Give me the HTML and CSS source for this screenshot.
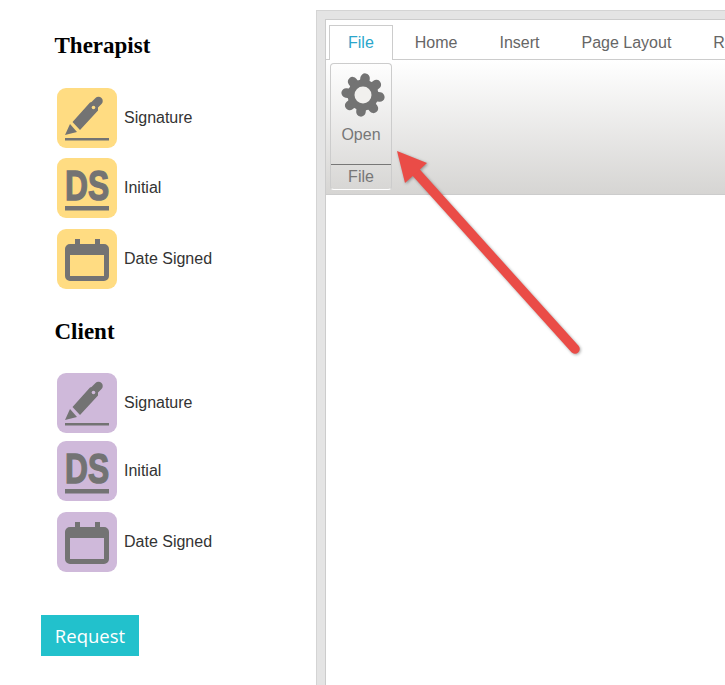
FILE: index.html
```html
<!DOCTYPE html>
<html lang="en">
<head>
  <meta charset="UTF-8" />
  <title>Signing fields</title>
  <link rel="stylesheet" href="styles.css">
</head>
<body>
  <svg width="0" height="0" class="defs">
    <defs>
      <symbol id="icon-sign" viewBox="0 0 60 60">
        <path d="M8 47 L13 36 L20 44 Z" />
        <path d="M15.5 34 L33 14.5 L34.5 14 L38.5 10 A4 4 0 0 1 44.500 16 L41 19.500 L41 22.500 L23 42 Z" />
        <circle cx="36.500" cy="19.500" r="1.800" class="hole" />
        <rect x="8" y="50" width="44" height="2.500" />
      </symbol>
      <symbol id="icon-date" viewBox="0 0 60 60">
        <path fill-rule="evenodd" d="M18 10 H23 V15 H38 V10 H43 V15 H47 A5 5 0 0 1 52 20 V47 A5 5 0 0 1 47 52 H13 A5 5 0 0 1 8 47 V20 A5 5 0 0 1 13 15 H18 Z M13 26 V47 H47 V26 Z" />
      </symbol>
    </defs>
  </svg>

  <div class="page">
    <aside class="sidebar">
      <h2 class="group-title">Therapist</h2>
      <div class="field-list therapist">
        <div class="field">
          <span class="field-icon"><svg width="60" height="60"><use href="#icon-sign" /></svg></span>
          <span>Signature</span>
        </div>
        <div class="field">
          <span class="field-icon"><svg width="60" height="60" viewBox="0 0 60 60"><text transform="translate(8 42) scale(0.755 1)" class="ds">DS</text><rect x="8" y="48" width="44" height="4.500" /></svg></span>
          <span>Initial</span>
        </div>
        <div class="field field-wide">
          <span class="field-icon"><svg width="60" height="60"><use href="#icon-date" /></svg></span>
          <span>Date Signed</span>
        </div>
      </div>

      <h2 class="group-title client-title">Client</h2>
      <div class="field-list client">
        <div class="field">
          <span class="field-icon"><svg width="60" height="60"><use href="#icon-sign" /></svg></span>
          <span>Signature</span>
        </div>
        <div class="field field-tight">
          <span class="field-icon"><svg width="60" height="60" viewBox="0 0 60 60"><text transform="translate(8 42) scale(0.755 1)" class="ds">DS</text><rect x="8" y="48" width="44" height="4.500" /></svg></span>
          <span>Initial</span>
        </div>
        <div class="field field-wide">
          <span class="field-icon"><svg width="60" height="60"><use href="#icon-date" /></svg></span>
          <span>Date Signed</span>
        </div>
      </div>

      <button class="request-btn">Request</button>
    </aside>

    <main class="viewer">
      <div class="editor">
        <div class="tabs">
          <div class="tab active">File</div>
          <div class="tab">Home</div>
          <div class="tab">Insert</div>
          <div class="tab">Page Layout</div>
          <div class="tab">Review</div>
        </div>
        <div class="ribbon">
          <div class="ribbon-group">
            <div class="ribbon-btn">
              <svg width="46" height="46" viewBox="0 0 46 46" class="gear">
                <g class="gear-teeth" transform="rotate(7 23 23)">
                  <line x1="23" y1="6" x2="23" y2="40" />
                  <line x1="6" y1="23" x2="40" y2="23" />
                  <line x1="11" y1="11" x2="35" y2="35" />
                  <line x1="35" y1="11" x2="11" y2="35" />
                </g>
                <circle cx="23" cy="23" r="15.500" class="gear-body" />
                <circle cx="23" cy="23" r="8.500" class="gear-hole" />
              </svg>
              <span>Open</span>
            </div>
            <div class="ribbon-label">File</div>
          </div>
        </div>
      </div>
    </main>

    <svg class="arrow" width="725" height="685" viewBox="0 0 725 685">
      <line x1="575" y1="349" x2="412" y2="168" class="arrow-shaft" />
      <path d="M397 151 L427 163 L405 183 Z" class="arrow-head" />
    </svg>
  </div>
</body>
</html>
```

FILE: styles.css
```css
html, body {
  margin: 0;
  padding: 0;
  background: #fff;
  overflow: hidden;
}
body {
  font-family: "Liberation Sans", Arial, sans-serif;
  font-size: 16px;
  color: #333;
}
.defs {
  position: absolute;
}
.page {
  position: relative;
  display: flex;
  width: 725px;
  height: 685px;
  overflow: hidden;
}

/* left column */
.sidebar {
  width: 316px;
  flex-shrink: 0;
  box-sizing: border-box;
  padding: 33px 0 0 41px;
}
.group-title {
  margin: 0 0 0 13.5px;
  font-family: "Liberation Serif", "Times New Roman", serif;
  font-size: 23px;
  line-height: 26px;
  font-weight: bold;
  color: #000;
}
.client-title {
  margin-top: 30px;
}
.field-list {
  display: flex;
  flex-direction: column;
  gap: 10px;
  margin: 29px 0 0 16px;
}
.field-list.client {
  margin-top: 28px;
}
.therapist {
  --tile: #ffdc82;
}
.client {
  --tile: #cfb9da;
}
.field {
  display: flex;
  align-items: center;
  gap: 7px;
}
.field-wide {
  margin-top: 1px;
}
.client .field-tight {
  margin-top: -2px;
}
.field-icon {
  display: block;
  width: 60px;
  height: 60px;
  border-radius: 9px;
  background: var(--tile);
  fill: #737373;
}
.field-icon svg {
  display: block;
}
.hole {
  fill: var(--tile);
}
.ds {
  font-family: "Liberation Sans", sans-serif;
  font-weight: bold;
  font-size: 42px;
  stroke: #737373;
  stroke-width: 1.4;
}
.request-btn {
  display: block;
  width: 98px;
  height: 41px;
  margin-top: 43px;
  padding: 0;
  border: none;
  background: #22c1cc;
  color: #fff;
  font-family: "Open Sans", sans-serif;
  font-size: 18.5px;
}

/* right side */
.viewer {
  flex: 1;
  min-width: 0;
  margin-top: 10px;
  padding: 8px 0 0 8px;
  background: #e4e4e4;
  border-top: 1px solid #d4d4d4;
  border-left: 1px solid #d4d4d4;
}
.editor {
  height: 100%;
  background: #fff;
  border-top: 1px solid #ccc;
  border-left: 1px solid #ccc;
}
.tabs {
  display: flex;
  height: 40px;
  box-sizing: border-box;
  padding: 5px 0 0 3px;
  border-bottom: 1px solid #ccc;
  white-space: nowrap;
}
.tab {
  padding: 0 20px;
  line-height: 34px;
  height: 35px;
  box-sizing: border-box;
  border: 1px solid transparent;
  border-bottom: none;
  color: #666;
}
.tab.active {
  padding: 0 18px;
  margin-right: 1px;
  background: #fff;
  color: #2ba6cb;
  border-color: #ccc;
}
.ribbon {
  height: 135px;
  box-sizing: border-box;
  padding: 3px 0 0 4px;
  background: linear-gradient(to bottom, #fff, #d6d5d3);
  border-bottom: 1px solid #ccc;
}
.ribbon-group {
  display: flex;
  flex-direction: column;
  width: 62px;
  height: 127px;
  box-sizing: border-box;
  border: 1px solid #ccc;
  border-bottom-color: #fff;
  border-radius: 4px;
  color: #777;
}
.ribbon-btn {
  flex: 1;
  display: flex;
  flex-direction: column;
  align-items: center;
}
.gear {
  display: block;
  margin: 8px 0 0 3px;
}
.ribbon-btn span {
  margin-top: 8px;
}
.gear-teeth line {
  stroke: #737373;
  stroke-width: 9.5;
  stroke-linecap: round;
}
.gear-body {
  fill: #737373;
}
.gear-hole {
  fill: #f1f0ee;
}
.ribbon-label {
  height: 24px;
  line-height: 23px;
  text-align: center;
  border-top: 1px solid #777;
}

/* annotation drawn over the screenshot */
.arrow {
  position: absolute;
  left: 0;
  top: 0;
  filter: drop-shadow(1px 1px 1.5px rgba(0, 0, 0, 0.35));
}
.arrow-shaft {
  stroke: #ea4c47;
  stroke-width: 9.5;
  stroke-linecap: round;
}
.arrow-head {
  fill: #ea4c47;
}
```
